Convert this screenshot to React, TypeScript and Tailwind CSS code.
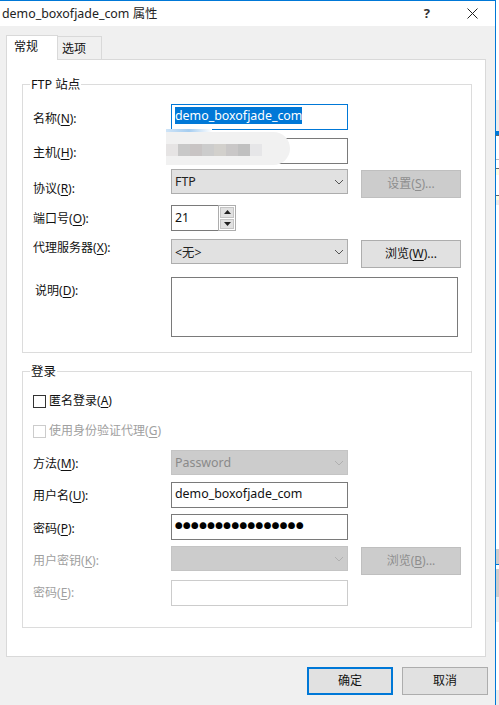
import React from "react";

const FONT = "[font-family:'Noto_Sans','Noto_Sans_CJK_SC',sans-serif]";

function U({ c }: { c: string }) {
  return <span className="underline underline-offset-2">{c}</span>;
}

function Label({ zh, k, suffix = ":", disabled, flat, className = "" }: { zh: string; k: string; suffix?: string; disabled?: boolean; flat?: boolean; className?: string }) {
  return (
    <span className={`whitespace-nowrap text-[12px] leading-[18px] ${flat ? "" : "pt-[3px]"} ${disabled ? "text-[#a0a0a0]" : "text-[#111]"} ${className}`}>
      {zh}(<U c={k} />){suffix}
    </span>
  );
}

function Chevron({ light }: { light?: boolean }) {
  return (
    <svg width="10" height="6" viewBox="0 0 10 6" className="shrink-0">
      <path d="M1 1l4 4 4-4" fill="none" stroke={light ? "#b0b0b0" : "#555"} strokeWidth="1" />
    </svg>
  );
}

function Select({ value, disabled, low, className = "" }: { value?: string; disabled?: boolean; low?: boolean; className?: string }) {
  return (
    <div
      className={`flex h-[25px] w-[177px] items-center justify-between border pl-[3px] pr-[3px] text-[12.4px] ${
        disabled ? "border-[#c4c4c4] bg-[#cccccc] text-[#8a8a8a]" : "border-[#adadad] bg-[#e1e1e1] text-[#222]"
      } ${className}`}
    >
      <span className={low ? "pt-[4px]" : "pt-[1px]"}>{value}</span>
      <Chevron light={disabled} />
    </div>
  );
}

function Input({ value, focused, disabled, dots, className = "" }: { value?: string; focused?: boolean; disabled?: boolean; dots?: boolean; className?: string }) {
  return (
    <div
      className={`flex h-[26px] w-[177px] items-center border pl-[3px] text-[12.4px] text-[#111] ${dots ? "" : focused ? "pb-[3px]" : "pb-[1px]"} ${
        focused ? "border-[#0078d7]" : disabled ? "border-[#cccccc]" : "border-[#7a7a7a]"
      } bg-white ${className}`}
    >
      {focused ? (
        <span className="bg-[#0078d7] leading-[17px] text-white">{value}</span>
      ) : dots ? (
        <span className="text-[7.5px] leading-none tracking-[0.56px] text-black">{value}</span>
      ) : (
        <span>{value}</span>
      )}
    </div>
  );
}

function Btn({ children, disabled, className = "" }: { children: React.ReactNode; disabled?: boolean; className?: string }) {
  return (
    <div
      className={`flex h-[28px] w-[100px] items-center justify-center border text-[12px] ${
        disabled ? "border-[#bfbfbf] bg-[#cccccc] text-[#8e8e8e]" : "border-[#adadad] bg-[#e1e1e1] text-[#111]"
      } ${className}`}
    >
      {children}
    </div>
  );
}

function Row({ h, mt, children, items = "items-center" }: { h: number; mt: string; children: React.ReactNode; items?: string }) {
  return (
    <div className={`flex ${items} ${mt}`} style={{ height: h }}>
      {children}
    </div>
  );
}

function Group({ title, className, children }: { title: string; className: string; children: React.ReactNode }) {
  return (
    <div className={`relative ml-[15px] w-[450px] border border-[#dcdcdc] ${className}`}>
      <span className="absolute left-[7px] top-[-9px] bg-white px-[1px] text-[12.5px] leading-[18px] text-[#111]">{title}</span>
      {children}
    </div>
  );
}

export default function App() {
  return (
    <div className={`${FONT} relative flex h-[705px] w-[499px] overflow-hidden bg-white`}>
      <div className="flex h-full w-[496px] shrink-0 flex-col border-r border-t border-[#0078d7] bg-[#f0f0f0]">
        {/* title bar */}
        <div className="flex h-[25px] shrink-0 items-center bg-white pl-[2px] pr-[17px]">
          <span className="pt-[1px] text-[12.4px] text-[#222]">demo_boxofjade_com 属性</span>
          <span className="ml-auto mr-[37px] text-[13px] font-bold text-[#333]">?</span>
          <svg width="11" height="11" viewBox="0 0 11 11">
            <path d="M.5.5l10 10M10.5.5l-10 10" stroke="#222" strokeWidth="1" />
          </svg>
        </div>

        {/* tabs */}
        <div className="relative ml-[6px] mt-[9px] flex h-[24px] shrink-0 items-end">
          <div className="z-10 flex h-[25px] w-[52px] translate-y-[1px] items-start justify-start border border-b-0 border-[#d9d9d9] bg-white pl-[7px] pt-[2px] text-[12px] text-[#111]">常规</div>
          <div className="ml-[-1px] flex h-[23px] w-[45px] items-center border border-b-0 border-l-0 border-[#d9d9d9] bg-[#f0f0f0] pl-[5px] pt-[2px] text-[12px] text-[#111]">选项</div>
        </div>

        {/* page */}
        <div className="ml-[6px] flex h-[598px] w-[480px] shrink-0 flex-col border border-[#d9d9d9] bg-white">
          <Group title="FTP 站点" className="mt-[24px] h-[269px]">
            <div className="flex flex-col pl-[10px]">
              <Row h={26} mt="mt-[19px]">
                <Label zh="名称" k="N" className="w-[138px]" />
                <Input value="demo_boxofjade_com" focused />
              </Row>
              <Row h={26} mt="mt-[8px]">
                <Label zh="主机" k="H" className="w-[138px]" />
                <Input />
              </Row>
              <Row h={29} mt="mt-[5px]" items="items-start">
                <Label zh="协议" k="R" className="mt-[8px] w-[138px]" />
                <Select value="FTP" />
                <Btn disabled className="ml-[13px] mt-[1px]">设置(<U c="S" />)...</Btn>
              </Row>
              <Row h={26} mt="mt-[7px]">
                <Label zh="端口号" k="O" flat className="mt-[2px] w-[138px]" />
                <div className="flex h-[26px] w-[65px] border border-[#7a7a7a] bg-white">
                  <span className="pl-[3px] pt-[3px] text-[12.4px] text-[#111]">21</span>
                  <div className="ml-auto mr-[-1px] mt-[-1px] flex h-[26px] w-[18px] flex-col gap-[1px] border border-[#adadad] bg-white p-[1px]">
                    <div className="flex h-[10.5px] flex-1 items-center justify-center border border-[#c4c4c4] bg-[#e1e1e1]">
                      <svg width="7" height="4" viewBox="0 0 7 4"><path d="M3.5 0L7 4H0z" fill="#222" /></svg>
                    </div>
                    <div className="flex h-[10.5px] flex-1 items-center justify-center border border-[#c4c4c4] bg-[#e1e1e1]">
                      <svg width="7" height="4" viewBox="0 0 7 4"><path d="M0 0h7L3.5 4z" fill="#222" /></svg>
                    </div>
                  </div>
                </div>
              </Row>
              <Row h={29} mt="mt-[8px]" items="items-start">
                <Label zh="代理服务器" k="X" flat className="w-[138px]" />
                <Select value="<无>" low />
                <Btn className="ml-[13px] mt-[1px]">浏览(<U c="W" />)...</Btn>
              </Row>
              <Row h={60} mt="mt-[9px]" items="items-start">
                <Label zh="说明" k="D" className="ml-[2px] mt-[2px] w-[136px]" />
                <div className="h-[60px] w-[287px] border border-[#7a7a7a] bg-white" />
              </Row>
            </div>
          </Group>

          <Group title="登录" className="mt-[18px] h-[257px]">
            <div className="flex flex-col pl-[10px]">
              <div className="mt-[20px] flex h-[18px] items-center gap-[3px]">
                <div className="h-[13px] w-[13px] border border-[#333] bg-white" />
                <Label zh="匿名登录" k="A" suffix="" flat />
              </div>
              <div className="mt-[12px] flex h-[18px] items-center gap-[3px]">
                <div className="h-[13px] w-[13px] border border-[#cccccc] bg-white" />
                <Label zh="使用身份验证代理" k="G" suffix="" disabled flat />
              </div>
              <Row h={25} mt="mt-[10px]">
                <Label zh="方法" k="M" className="w-[138px]" />
                <Select value="Password" disabled />
              </Row>
              <Row h={26} mt="mt-[7px]">
                <Label zh="用户名" k="U" flat className="mt-[1px] w-[138px]" />
                <Input value="demo_boxofjade_com" />
              </Row>
              <Row h={26} mt="mt-[6px]">
                <Label zh="密码" k="P" className="w-[138px]" />
                <Input value="●●●●●●●●●●●●●●●●" dots />
              </Row>
              <Row h={29} mt="mt-[6px]" items="items-start">
                <Label zh="用户密钥" k="K" disabled className="mt-[3px] w-[138px]" />
                <Select disabled />
                <Btn disabled className="ml-[13px] mt-[1px]">浏览(<U c="B" />)...</Btn>
              </Row>
              <Row h={26} mt="mt-[5px]">
                <Label zh="密码" k="E" disabled flat className="w-[138px]" />
                <Input disabled />
              </Row>
            </div>
          </Group>
        </div>

        {/* footer */}
        <div className="mt-[10px] flex justify-end gap-[9px] pr-[7px]">
          <div className="flex h-[28px] w-[86px] items-center justify-center border-2 border-[#0078d7] bg-[#e1e1e1] text-[12px] text-[#111]">确定</div>
          <div className="flex h-[28px] w-[86px] items-center justify-center border border-[#adadad] bg-[#e1e1e1] text-[12px] text-[#111]">取消</div>
        </div>
      </div>

      {/* sliver of the window behind the dialog */}
      <div className="flex h-full flex-1 flex-col bg-white">
        <div className="h-[100px] shrink-0" />
        <div className="h-[31px] shrink-0 bg-[#ececec]" />
        <div className="h-[4px] shrink-0 bg-[#0078d7]" />
        <div className="h-[1px] shrink-0 bg-[#666]" />
        <div className="h-[23px] shrink-0" />
        <div className="h-[1px] shrink-0 bg-[#bbb]" />
        <div className="h-[8px] shrink-0" />
        <div className="h-[1px] shrink-0 bg-[#666]" />
        <div className="h-[6px] shrink-0 bg-[#fdfde0]" />
        <div className="h-[20px] shrink-0" />
        <div className="h-[1px] shrink-0 bg-[#666]" />
        <div className="h-[4px] shrink-0 bg-[#fdfde0]" />
        <div className="h-[5px] shrink-0 bg-[#ececec]" />
        <div className="h-[344px] shrink-0" />
        <div className="h-[15px] shrink-0 bg-[#cccccc]" />
        <div className="h-[1px] shrink-0 bg-[#0078d7]" />
        <div className="h-[4px] shrink-0" />
        <div className="h-[28px] shrink-0 bg-[#cccccc]" />
        <div className="h-[25px] shrink-0 bg-[#ececec]" />
        <div className="h-[68px] shrink-0" />
        <div className="h-[15px] shrink-0 bg-[#ececec]" />
      </div>

      {/* retouched smear over the host field */}
      <div className="absolute left-[166px] top-[129px] h-[4px] w-[46px] bg-gradient-to-r from-[#cfe4f7] via-[#a5cdf0] to-white" />
      <div className="absolute left-[166px] top-[132px] h-[33px] w-[124px] rounded-r-[18px] bg-[#f1f1f1]" />
      <div className="absolute left-[166px] top-[144px] flex h-[12px]">
        <div className="h-full w-[12px] bg-[#e6e4e4]" />
        <div className="h-full w-[12px] bg-[#c8c8c8]" />
        <div className="h-full w-[12px] bg-[#c8c4c4]" />
        <div className="h-full w-[12px] bg-[#cccccc]" />
        <div className="h-full w-[12px] bg-[#d2d0cc]" />
        <div className="h-full w-[12px] bg-[#c9c7c7]" />
        <div className="h-full w-[12px] bg-[#c0c0c0]" />
        <div className="h-full w-[12px] bg-[#e6e6e8]" />
      </div>
    </div>
  );
}
